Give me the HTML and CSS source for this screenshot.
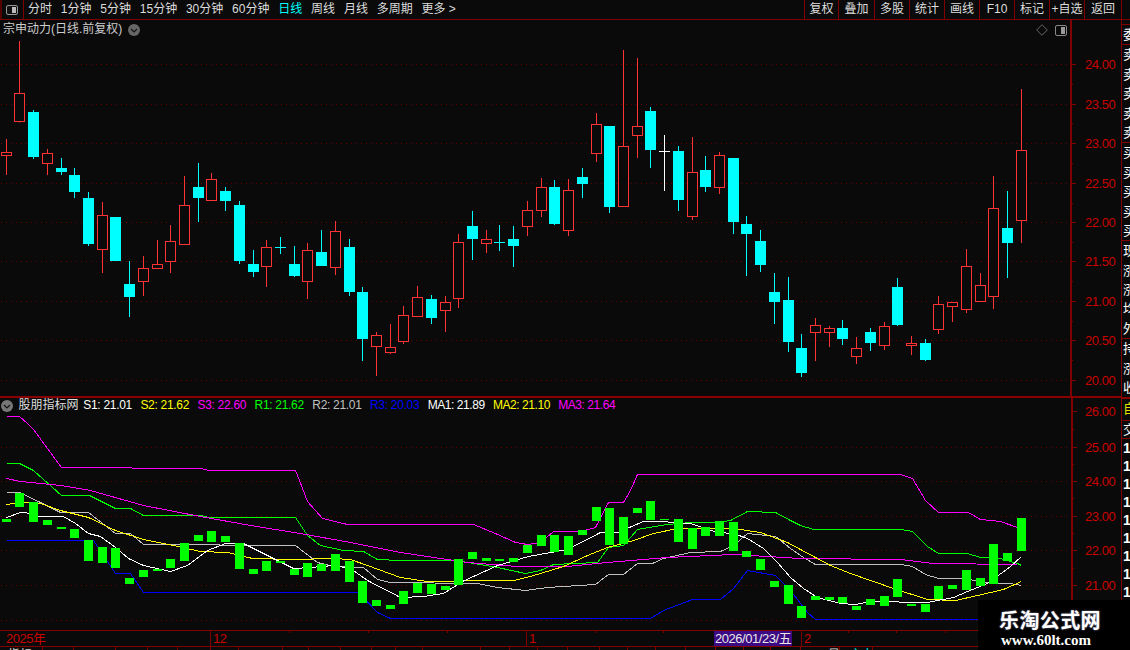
FILE: index.html
```html
<!DOCTYPE html>
<html lang="zh">
<head>
<meta charset="utf-8">
<title>宗申动力</title>
<link rel="stylesheet" href="styles.css">
</head>
<body>
<div class="app">
  <header class="topbar">
    <div class="logo-box">
      <svg class="logo-icon" width="12" height="10" viewBox="0 0 12 10"><rect x="0.5" y="0.5" width="11" height="9" rx="1.5" fill="#111" stroke="#999"/><rect x="6" y="2" width="4" height="6" fill="#bbb"/></svg>
    </div>
    <nav class="periods">
      <span class="p">分时</span><span class="p">1分钟</span><span class="p">5分钟</span><span class="p">15分钟</span><span class="p">30分钟</span><span class="p">60分钟</span><span class="p active">日线</span><span class="p">周线</span><span class="p">月线</span><span class="p">多周期</span><span class="p">更多 &gt;</span>
    </nav>
    <nav class="tools">
      <span class="t">复权</span><span class="t">叠加</span><span class="t">多股</span><span class="t">统计</span><span class="t">画线</span><span class="t">F10</span><span class="t">标记</span><span class="t">+自选</span><span class="t">返回</span>
    </nav>
  </header>
  <div class="workspace">
    <div class="charts">
      <section class="pane pane-main">
        <div class="pane-title">
          <span>宗申动力(日线.前复权)</span>
          <svg class="chev" width="12" height="12" viewBox="0 0 12 12"><circle cx="6" cy="6" r="6" fill="#666"/><path d="M3 5 L6 8 L9 5" fill="none" stroke="#111" stroke-width="1.2"/></svg>
        </div>
        <div class="pane-tools">
          <svg width="12" height="12" viewBox="0 0 12 12"><path d="M6 0.7 L11.3 6 L6 11.3 L0.7 6 Z" fill="none" stroke="#666"/></svg>
          <svg width="12" height="11" viewBox="0 0 12 11"><rect x="0.5" y="0.5" width="11" height="10" rx="1.5" fill="none" stroke="#888"/><rect x="6" y="2" width="4" height="7" fill="#999"/></svg>
        </div>
        <svg id="price" class="plot" width="1121" height="376" viewBox="0 20 1121 376"></svg>
      </section>
      <section class="pane pane-sub">
        <div class="legend">
          <svg class="chev" width="12" height="12" viewBox="0 0 12 12"><circle cx="6" cy="6" r="6" fill="#777"/><path d="M3 5 L6 8 L9 5" fill="none" stroke="#111" stroke-width="1.2"/></svg>
          <span class="legend-name">股朋指标网</span>
          <span class="c-white">S1: 21.01</span><span class="c-yellow">S2: 21.62</span><span class="c-magenta">S3: 22.60</span><span class="c-green">R1: 21.62</span><span class="c-gray">R2: 21.01</span><span class="c-blue">R3: 20.03</span><span class="c-white tight">MA1: 21.89</span><span class="c-yellow tight">MA2: 21.10</span><span class="c-magenta tight">MA3: 21.64</span>
        </div>
        <svg id="ind" class="plot" width="1121" height="232" viewBox="0 398 1121 232"></svg>
      </section>
      <svg id="dates" class="plot" width="1121" height="20" viewBox="0 630 1121 20"></svg>
    </div>
    <aside class="strip">
      <div class="strip-gap"></div>
      <div class="group"><div class="row">委</div></div>
      <div class="group"><div class="row">卖</div><div class="row">卖</div><div class="row">卖</div><div class="row">卖</div><div class="row">卖</div></div>
      <div class="group"><div class="row">买</div><div class="row">买</div><div class="row">买</div><div class="row">买</div><div class="row">买</div></div>
      <div class="group"><div class="row">现</div><div class="row">涨</div><div class="row">涨</div><div class="row">均</div><div class="row">外</div></div>
      <div class="group group-end"><div class="row">持</div><div class="row">涨</div><div class="row">收</div></div>
      <div class="group"><div class="row row-yellow">自</div></div>
      <div class="group"><div class="row row-short">交</div></div>
      <div class="row row-digit">1</div><div class="row row-digit">1</div><div class="row row-digit">1</div><div class="row row-digit">1</div><div class="row row-digit">1</div><div class="row row-digit">1</div><div class="row row-digit">1</div><div class="row row-digit">1</div><div class="row row-digit">1</div>
    </aside>
  </div>
  <div class="watermark">
    <div class="wm-title">乐淘公式网</div>
    <div class="wm-url">www.60lt.com</div>
  </div>
</div>
<script src="script.js"></script>
</body>
</html>
```
FILE: styles.css
```css
* { box-sizing: border-box; }
html, body { margin: 0; padding: 0; background: #0a0a0a; }
body { width: 1130px; height: 650px; overflow: hidden; font-family: "Liberation Sans", "Noto Sans CJK SC", sans-serif; font-size: 12px; color: #ddd; }
.app { position: relative; width: 1130px; height: 650px; overflow: hidden; display: flex; flex-direction: column; }

.topbar { display: flex; align-items: stretch; height: 20px; border-bottom: 1px solid #800000; flex: none; }
.logo-box { width: 24px; display: flex; align-items: center; justify-content: center; border-left: 2px solid #500; border-right: 1px solid #800000; padding-left: 0; padding-right: 1px; }
.logo-icon { display: block; }
.periods { display: flex; align-items: center; gap: 8.8px; padding-left: 4px; }
.p { white-space: nowrap; line-height: 19px; }
.p.active { color: #00ffff; }
.tools { display: flex; margin-left: auto; margin-right: 8px; border-right: 1px solid #800000; }
.t { width: 35px; border-left: 1px solid #800000; text-align: center; line-height: 19px; white-space: nowrap; }
.t:nth-child(1) { width: 34px; }
.t:nth-child(2) { width: 36px; }
.t:nth-child(9) { width: 37px; }

.workspace { display: flex; flex: 1; min-height: 0; }
.charts { width: 1121px; flex: none; display: flex; flex-direction: column; }
.pane { position: relative; flex: none; }
.pane-main { height: 376px; border-bottom: 0; }
.pane-sub { height: 234px; border-top: 2px solid #8a0000; }
.plot { display: block; }

.pane-title { position: absolute; left: 3px; top: 1px; display: flex; align-items: center; gap: 6px; color: #ccc; line-height: 17px; }
.pane-tools { position: absolute; left: 1036px; top: 4px; display: flex; gap: 7px; align-items: center; }
.legend { position: absolute; left: 1px; top: 0; display: flex; align-items: center; gap: 8.4px; line-height: 15px; white-space: nowrap; letter-spacing: -0.3px; }
.legend .tight { letter-spacing: -0.45px; }
.legend .chev { margin-right: -3px; }
.legend-name { margin-right: -3.5px; color: #ddd; letter-spacing: 0; }
.c-white { color: #fff; } .c-yellow { color: #ffff00; } .c-magenta { color: #ff00ff; } .c-green { color: #00ff00; } .c-gray { color: #c0c0c0; } .c-blue { color: #0000ff; }

.strip { width: 9px; flex: none; border-left: 1px solid #800000; display: flex; flex-direction: column; overflow: hidden; color: #fff; }
.strip-gap { height: 5px; flex: none; border-bottom: 1px solid #800000; }
.group { flex: none; border-bottom: 1px solid #800000; }
.group-end { border-bottom: 2px solid #8a0000; }
.row { height: 19.4px; line-height: 19px; font-size: 13px; white-space: nowrap; padding-left: 1px; }
.row-yellow { color: #e0e000; height: 21px; }
.row-short { height: 17px; line-height: 17px; }
.row-digit { height: 18px; line-height: 18px; font-weight: bold; font-size: 14px; }

.watermark { position: absolute; left: 978px; top: 600px; width: 152px; height: 50px; background: #000; color: #fff; text-align: center; padding-left: 0; }
.wm-title { font-family: "Noto Sans CJK SC", sans-serif; font-weight: 700; font-size: 20px; line-height: 22px; margin-top: 9px; letter-spacing: 0.4px; text-shadow: 0 0 2px #88a; padding-right: 8px; }
.wm-url { font-family: "Liberation Serif", serif; font-weight: 700; font-size: 15px; line-height: 17px; margin-top: 1px; padding-right: 16px; }
```
FILE: script.js
```js
var candles = [
[6,139,152.5,155.5,175,'r'],[19,41,93.5,121.5,122.5,'r'],[33,110,112,157,159,'c'],[47,149,153.5,163.5,175,'r'],
[61,158,168,172,175,'c'],[74,168,175,192,198,'c'],[88,192,198,244,246,'c'],[102,202,215.5,249.5,273,'r'],
[115,217,217,261,261,'c'],[129,261,284,297,317,'c'],[143,256,268.5,281.5,296,'r'],[157,240,264.5,268.5,268.5,'r'],
[170,225,241.5,261.5,273,'r'],[184,176,205.5,244.5,244.5,'r'],[198,163,187,198,222,'c'],[211,173,179.5,200.5,200.5,'r'],
[225,187,191,201,211,'c'],[239,201,205,261,264,'c'],[253,250,264,272,277,'c'],[266,240,247.5,266.5,287,'r'],
[280,237,247,247,254,'d'],[294,246,264,276,277,'c'],[307,243,250.5,281.5,299,'r'],[321,230,252,266,266,'c'],
[335,221,231.5,267.5,275,'r'],[349,239,247,292,296,'c'],[362,287,292,339,361,'c'],[376,332,335.5,346.5,376,'r'],
[390,324,347.5,352.5,354,'r'],[403,306,315.5,341.5,344,'r'],[417,286,297.5,316.5,316.5,'r'],[431,295,299,318,324,'c'],
[445,296,302.5,310.5,332,'r'],[458,234,242.5,298.5,308,'r'],[472,211,226,239,260,'c'],[486,230,239.5,243.5,253,'r'],
[499,225,242,242,251,'d'],[513,226,239,246,267,'c'],[527,201,210.5,226.5,236,'r'],[541,178,187.5,210.5,217,'r'],
[554,180,187,224,225,'c'],[568,179,190.5,230.5,236,'r'],[582,168,177,184,198,'c'],[596,113,124.5,153.5,162,'r'],
[609,126,126,207,213,'c'],[623,50,146.5,206.5,206.5,'r'],[637,58,126.5,135.5,158,'r'],[650,107,111,150,168,'c'],
[664,135,151,151,191,'w'],[678,146,151,200,211,'c'],[692,137,172.5,216.5,220,'r'],[705,156,170,187,192,'c'],
[719,152,155.5,187.5,194,'r'],[733,158,158,222,234,'c'],[746,216,224,234,276,'c'],[760,230,241,265,272,'c'],
[774,273,292,302,324,'c'],[788,277,300,342,352,'c'],[801,334,348,373,377,'c'],[815,318,325.5,332.5,361,'r'],
[829,326,328.5,332.5,347,'r'],[842,320,328,339,345,'c'],[856,337,348.5,356.5,364,'r'],[870,328,332,343,351,'c'],
[884,322,326.5,345.5,350,'r'],[897,278,287,325,326,'c'],[911,336,343.5,345.5,355,'r'],[925,339,343,360,361,'c'],
[938,296,304.5,329.5,334,'r'],[952,302,302.5,306.5,322,'r'],[966,249,266.5,309.5,313,'r'],[980,273,285.5,301.5,301.5,'r'],
[993,176,208.5,296.5,309,'r'],[1007,191,228,243,278,'c'],[1021,89,150.5,220.5,243,'r']
];
var sticks = [
[519,522],[493,507],[502,522],[520,525],[527,529],[529,538],[540,561],[547,563],[548,568],[578,584],
[570,577],[569,571],[559,568],[543,561],[535,541],[531,542],[536,542],[543,569],[569,574],[561,571],
[561,563],[569,575],[563,577],[564,571],[554,571],[561,582],[581,603],[600,606],[605,609],[591,604],
[583,593],[584,594],[586,590],[559,585],[552,559],[558,561],[559,561],[558,562],[545,553],[535,546],
[535,552],[536,555],[530,535],[507,521],[508,545],[517,544],[508,513],[501,520],[519,520],[519,542],
[528,549],[527,536],[521,536],[522,551],[551,557],[559,570],[581,587],[585,604],[606,618],[596,600],
[597,600],[597,603],[606,610],[599,605],[596,606],[579,597],[604,606],[604,612],[586,599],[585,589],
[570,590],[578,586],[544,584],[553,561],[518,551]
];
var lines = [
['#c0c0c0','6,492 19,492 40,502 60,512 88,512 115,533 130,533 143,544 295,545 317,562 333,566 363,567 377,579 390,582 477,583 497,587 525,590 547,587 595,584 608,574 623,574 637,563 652,563 663,558 690,552 720,551 733,545 747,533 775,536 790,548 803,557 815,564 900,564 912,566 925,574 938,578 967,578 980,582 1010,583 1021,585'],
['#0000ff','6,540 93,540 115,573 130,573 143,592 358,592 377,612 390,618 650,618 663,610 692,599 720,599 733,588 747,570 775,575 790,590 807,612 815,619 1017,619'],
['#00ff00','6,463 19,463 33,470 61,495 89,495 115,508 130,508 143,515 200,515 208,517 295,517 307,535 320,545 343,550 363,551 377,559 400,560 453,560 468,562 497,567 525,573 540,570 553,564 597,562 608,547 623,545 637,529 667,524 690,522 717,522 730,520 747,511 775,512 790,520 800,525 813,529 900,529 912,531 927,546 938,553 967,553 980,557 1000,558 1017,563 1021,565'],
['#ff00ff','6,416 19,416 27,423 33,429 61,467 201,468 208,470 295,470 299,480 307,501 322,518 347,524 473,524 495,533 515,542 527,544 540,542 553,531 580,531 595,527 608,502 623,502 630,490 637,474 900,474 912,478 925,500 938,512 968,512 980,519 1000,521 1017,527'],
['#ff00ff','6,478 20,481 60,485 90,490 143,505 200,516 250,525 300,533 350,542 400,552 467,562 517,566 567,566 607,562 667,557 733,554 767,556 800,558 900,559 933,563 1017,564'],
['#ffff00','6,504 20,502 40,503 60,510 88,517 115,530 143,539 173,545 200,551 227,552 252,558 293,559 333,558 350,559 367,565 400,577 427,581 480,580 513,580 530,576 563,566 587,555 607,547 633,540 653,533 677,528 733,528 760,532 787,542 800,549 830,565 850,573 893,588 927,599 955,600 977,595 1003,589 1021,581'],
['#ffffff','6,517 20,512 25,512 37,516 63,516 75,523 88,533 100,536 115,547 128,558 143,565 170,571 187,565 207,550 225,543 243,543 267,555 293,568 310,567 333,565 350,568 367,580 400,597 423,596 443,593 462,581 497,565 528,556 567,549 600,532 617,532 643,521 660,521 690,523 717,532 733,533 747,538 763,548 777,562 790,577 803,588 817,597 840,603 855,604 870,601 927,602 953,597 967,591 987,583 1010,566 1021,556']
];

var RED = '#ff3333', CYAN = '#00ffff', AXIS = '#800000', LABEL = '#c80000', GRID = '#660000', BG = '#0a0a0a';

function rect(x, y, w, h, fill) { return '<rect x="' + x + '" y="' + y + '" width="' + w + '" height="' + h + '" fill="' + fill + '"/>'; }
function hdots(y) { return '<line x1="1" x2="1067" y1="' + (y + .5) + '" y2="' + (y + .5) + '" stroke="' + GRID + '" stroke-dasharray="1 4"/>'; }
function label(x, y, s) { return '<text x="' + x + '" y="' + y + '" fill="' + LABEL + '" font-family="Liberation Sans, Noto Sans CJK SC, sans-serif" font-size="13" letter-spacing="-0.45">' + s + '</text>'; }

function axis(ticks, minors, xLine, w) {
  var o = rect(xLine, ticks.top, w, ticks.bottom - ticks.top, AXIS);
  ticks.items.forEach(function (t) {
    o += hdots(t[0]) + rect(xLine, t[0], 6, 1, AXIS);
    if (t[1]) o += label(1085, t[0] + 5, t[1]);
  });
  minors.forEach(function (y) { o += rect(xLine, y, 3, 1, AXIS); });
  return o;
}

function drawCandle(c) {
  var x = c[0], h = c[1], t = c[2], b = c[3], l = c[4], k = c[5], o = '';
  var col = k === 'r' ? RED : k === 'w' ? '#ffffff' : CYAN;
  o += rect(x, h, 1, l - h, col);
  if (k === 'd' || k === 'w') return o + rect(x - 5, t, 11, 1, col);
  if (k === 'c') return o + rect(x - 5, t, 11, b - t, CYAN);
  return o + '<rect x="' + (x - 4.5) + '" y="' + t + '" width="10" height="' + (b - t) + '" fill="' + BG + '" stroke="' + RED + '"/>';
}

var price = axis(
  { top: 20, bottom: 396, items: [[64, '24.00'], [104, '23.50'], [143, '23.00'], [183, '22.50'], [222, '22.00'], [261, '21.50'], [301, '21.00'], [340, '20.50'], [380, '20.00']] },
  [84, 123, 163, 203, 242, 281, 321, 360], 1070, 2);
candles.forEach(function (c) { price += drawCandle(c); });
document.getElementById('price').innerHTML = price;

var ind = axis(
  { top: 398, bottom: 630, items: [[447, '25.00'], [481, '24.00'], [516, '23.00'], [550, '22.00'], [585, '21.00'], [620, '']] },
  [429, 464, 498, 533, 568, 602], 1071, 2);
ind += rect(1071, 411, 6, 1, AXIS) + label(1085, 416, '26.00');
ind += '<g transform="translate(0.5 0.5)">';
lines.forEach(function (l) {
  ind += '<polyline points="' + l[1] + '" fill="none" stroke="' + l[0] + '" stroke-width="1" shape-rendering="crispEdges"/>';
});
ind += '</g>';
sticks.forEach(function (s, i) {
  var x = candles[i][0];
  ind += rect(x - 4, s[0], 9, s[1] - s[0], '#00ff00');
});
document.getElementById('ind').innerHTML = ind;

var d = rect(0, 630, 1121, 1, AXIS) + rect(0, 646, 1121, 1, AXIS) + rect(1071, 630, 2, 16, AXIS);
[210, 526, 801].forEach(function (x) { d += rect(x, 630, 1, 16, AXIS); });
[289, 368, 447, 595, 663, 848, 896, 945].forEach(function (x) { d += rect(x, 631, 1, 2, AXIS); });
d += label(6, 643, '2025年') + label(213, 643, '12') + label(529, 643, '1') + label(804, 643, '2');
d += rect(714, 631, 78, 15, '#3c0a82');
d += '<text x="715" y="643" fill="#e8e8e8" font-family="Liberation Sans, Noto Sans CJK SC, sans-serif" font-size="13" letter-spacing="-0.45">2026/01/23/五</text>';
[42, 73, 115, 147, 177, 210, 238, 282, 308, 340, 371, 395, 422, 480, 509, 537, 567, 599, 627, 655, 685, 715, 743, 770, 800, 839, 872].forEach(function (x) {
  d += rect(x, 647, 1, 3, AXIS);
});
d += '<text x="8" y="659" fill="#ddd" font-size="12" font-family="Noto Sans CJK SC, sans-serif">指标</text>';
d += '<text x="828" y="659" fill="#ddd" font-size="12" font-family="Noto Sans CJK SC, sans-serif">量</text>';
d += '<text x="850" y="659" fill="#00ffff" font-size="12" font-family="Noto Sans CJK SC, sans-serif">主力</text>';
document.getElementById('dates').innerHTML = d;
```
